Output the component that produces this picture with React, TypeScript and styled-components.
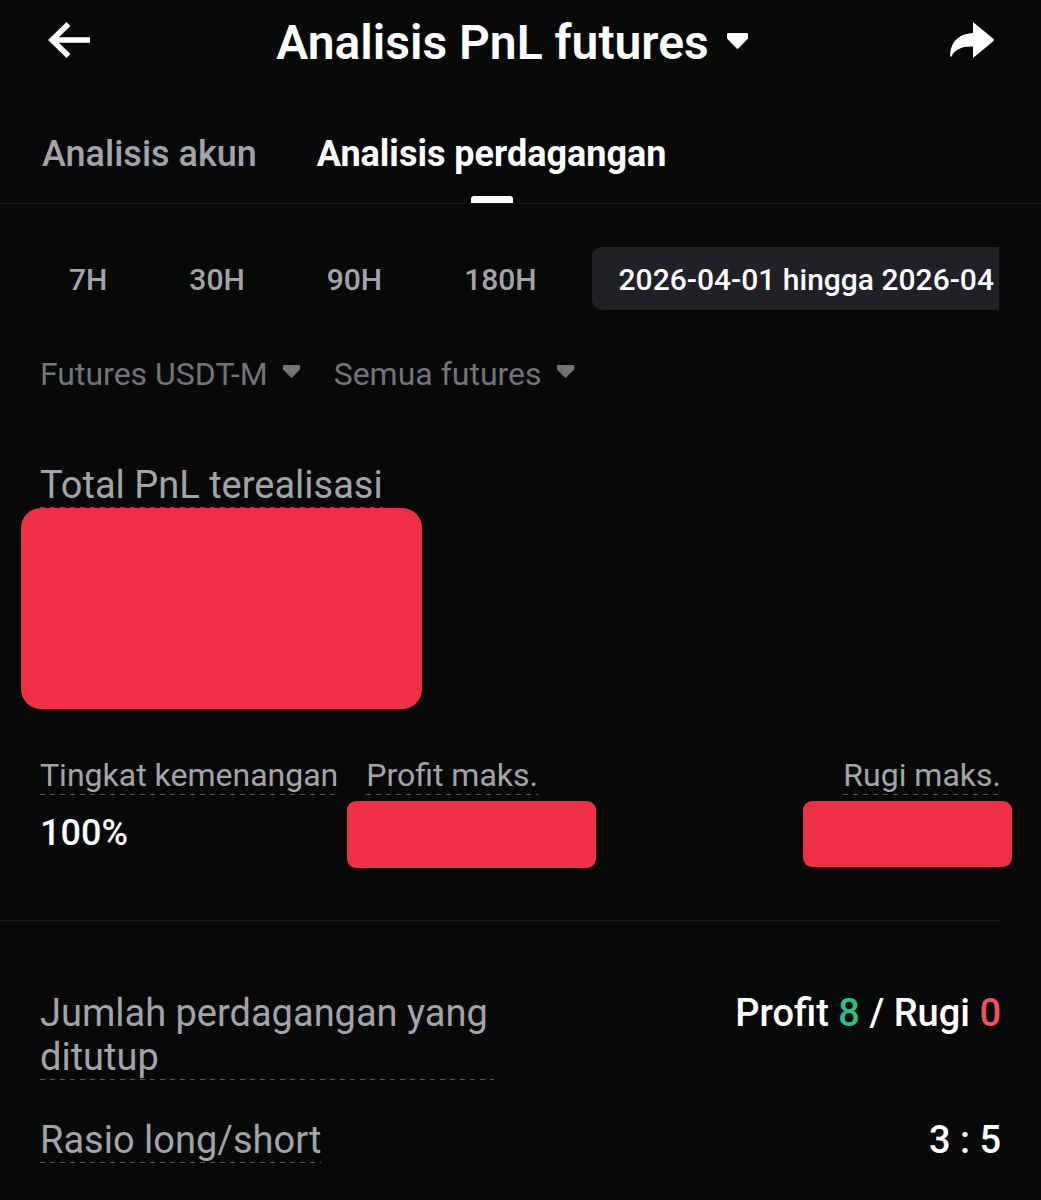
import React, { useState } from "react";
import styled, { createGlobalStyle } from "styled-components";

const c = {
  bg: "#070908",
  white: "#ffffff",
  label: "#a3a3a8",
  muted: "#73737a",
  chip: "#202126",
  line: "#181a1a",
  dash: "#55565a",
  red: "#ef3044",
  green: "#2dbd85",
  loss: "#f0525f",
};

const GlobalStyle = createGlobalStyle`
  *, *::before, *::after { box-sizing: border-box; }
  body {
    margin: 0;
    background: ${c.bg};
    color: ${c.white};
    font-family: Roboto, "Liberation Sans", sans-serif;
  }
  button, select { font-family: inherit; }
`;

const Page = styled.div`
  min-height: 100vh;
  background: ${c.bg};
`;

const Header = styled.header`
  display: flex;
  align-items: center;
  justify-content: space-between;
  height: 84px;
  padding: 0 47px;
`;

const IconButton = styled.button`
  display: flex;
  padding: 0 0 4px;
  border: 0;
  background: none;
  color: ${c.white};
  cursor: pointer;
`;

const Title = styled.h1`
  margin: 0;
  font-size: 48px;
  line-height: 56px;
`;

const TitleButton = styled.button`
  display: flex;
  align-items: center;
  gap: 18px;
  padding: 2px 16px 0 0;
  border: 0;
  background: none;
  color: ${c.white};
  font-size: 48px;
  font-weight: 600;
  line-height: 56px;
  cursor: pointer;
`;

const Tabs = styled.nav`
  display: flex;
  gap: 60px;
  height: 120px;
  padding: 0 42px;
  border-bottom: 1px solid ${c.line};
`;

const Tab = styled.button<{ $active?: boolean }>`
  position: relative;
  padding: 20px 0 0;
  border: 0;
  background: none;
  color: ${(p) => (p.$active ? c.white : c.label)};
  font-size: 36px;
  font-weight: ${(p) => (p.$active ? 700 : 500)};
  line-height: 44px;
  cursor: pointer;

  &::after {
    content: "";
    display: ${(p) => (p.$active ? "block" : "none")};
    position: absolute;
    bottom: 0;
    left: 50%;
    width: 42px;
    height: 7px;
    margin-left: -21px;
    border-radius: 3px 3px 0 0;
    background: ${c.white};
  }
`;

const Chips = styled.div`
  display: flex;
  gap: 28px;
  margin: 43px 42px 0;
  overflow: hidden;
`;

const Chip = styled.button<{ $active?: boolean }>`
  flex: none;
  height: 63px;
  padding: 3px 27px 0;
  border: 0;
  border-radius: 10px;
  background: ${(p) => (p.$active ? c.chip : "none")};
  color: ${(p) => (p.$active ? c.white : c.label)};
  font-size: 30px;
  font-weight: 500;
  line-height: 40px;
  white-space: nowrap;
  cursor: pointer;
`;

const Filters = styled.div`
  display: flex;
  gap: 34px;
  margin: 44px 40px 0;
`;

const FilterLabel = styled.label`
  display: flex;
  align-items: center;
  gap: 15px;
  color: ${c.muted};
`;

const FilterSelect = styled.select`
  appearance: none;
  field-sizing: content;
  padding: 0;
  border: 0;
  background: none;
  color: inherit;
  font-size: 32px;
  line-height: 40px;
`;

const Realised = styled.section`
  margin: 69px 40px 0;
`;

const Term = styled.span<{ $large?: boolean }>`
  display: block;
  width: fit-content;
  padding-bottom: 1px;
  background: repeating-linear-gradient(90deg, ${c.dash} 0 5px, transparent 5px 10px) left bottom / 100% 1px no-repeat;
  color: ${c.label};
  font-size: ${(p) => (p.$large ? 38 : 32)}px;
  line-height: ${(p) => (p.$large ? 44 : 38)}px;
`;

const Mask = styled.div<{ $width: number; $height: number; $radius: number }>`
  width: ${(p) => p.$width}px;
  height: ${(p) => p.$height}px;
  margin: 0 -11px 0 -19px;
  border-radius: ${(p) => p.$radius}px;
  background: ${c.red};
`;

const Stats = styled.section`
  display: flex;
  gap: 28px;
  margin-right: 40px;
  padding: 47px 0 52px 40px;
  border-bottom: 1px solid ${c.line};
`;

const Stat = styled.div<{ $end?: boolean }>`
  display: flex;
  flex-direction: column;
  align-items: ${(p) => (p.$end ? "flex-end" : "flex-start")};
  gap: 6px;
  margin-left: ${(p) => (p.$end ? "auto" : 0)};
`;

const StatValue = styled.strong`
  font-size: 36px;
  font-weight: 500;
  line-height: 64px;
`;

const Rows = styled.section`
  display: flex;
  flex-direction: column;
  gap: 38px;
  margin: 70px 40px 0;
`;

const Row = styled.div`
  display: flex;
  align-items: flex-start;
  justify-content: space-between;
`;

const RowLabel = styled.div`
  flex: 0 1 454px;
`;

const RowValue = styled.strong`
  font-size: 38px;
  font-weight: 500;
  line-height: 44px;
`;

const Amount = styled.span<{ $tone: string }>`
  color: ${(p) => p.$tone};
`;

const CaretIcon = styled.svg`
  flex: none;
  margin-bottom: 5px;
`;

const Caret = ({ width = 17 }: { width?: number }) => (
  <CaretIcon width={width} height={Math.round(width * 0.76)} viewBox="0 0 21 16" fill="currentColor" aria-hidden="true">
    <path d="M1 0h19q1 0 1 1v4.500L11.300 15.500q-.8.700-1.600 0L0 5.500V1q0-1 1-1z" />
  </CaretIcon>
);

const periods = ["7H", "30H", "90H", "180H", "2026-04-01 hingga 2026-04"];

export default function App() {
  const [period, setPeriod] = useState(4);
  const [tab, setTab] = useState(1);

  return (
    <Page>
      <GlobalStyle />
      <Header>
        <IconButton aria-label="Kembali">
          <svg width="43" height="36" viewBox="0 0 43 36" fill="none" stroke="currentColor" strokeWidth="5.500">
            <path d="M21.500 2 5 18 21.500 34M5 18h38" />
          </svg>
        </IconButton>
        <Title>
          <TitleButton aria-haspopup="menu">
            Analisis PnL futures
            <Caret width={21} />
          </TitleButton>
        </Title>
        <IconButton aria-label="Bagikan">
          <svg width="44" height="36" viewBox="0 0 44 36" fill="currentColor">
            <path d="M23 0 43.300 16.800q1 1.200 0 2.400L23 36V24.500C13 24 5 27 1.500 34.500q-.7.700-1.200 0C-.5 23 7 11.500 23 11z" />
          </svg>
        </IconButton>
      </Header>

      <Tabs>
        {["Analisis akun", "Analisis perdagangan"].map((name, i) => (
          <Tab key={name} $active={i === tab} onClick={() => setTab(i)}>
            {name}
          </Tab>
        ))}
      </Tabs>

      <main>
        <Chips>
          {periods.map((name, i) => (
            <Chip key={name} $active={i === period} onClick={() => setPeriod(i)}>
              {name}
            </Chip>
          ))}
        </Chips>

        <Filters>
          <FilterLabel>
            <FilterSelect aria-label="Jenis futures">
              <option>Futures USDT-M</option>
            </FilterSelect>
            <Caret />
          </FilterLabel>
          <FilterLabel>
            <FilterSelect aria-label="Kontrak">
              <option>Semua futures</option>
            </FilterSelect>
            <Caret />
          </FilterLabel>
        </Filters>

        <Realised>
          <Term $large>Total PnL terealisasi</Term>
          <Mask $width={401} $height={201} $radius={20} />
        </Realised>

        <Stats>
          <Stat>
            <Term>Tingkat kemenangan</Term>
            <StatValue>100%</StatValue>
          </Stat>
          <Stat>
            <Term>Profit maks.</Term>
            <Mask $width={249} $height={67} $radius={9} />
          </Stat>
          <Stat $end>
            <Term>Rugi maks.</Term>
            <Mask $width={209} $height={66} $radius={9} />
          </Stat>
        </Stats>

        <Rows>
          <Row>
            <RowLabel>
              <Term $large>Jumlah perdagangan yang ditutup</Term>
            </RowLabel>
            <RowValue>
              Profit <Amount $tone={c.green}>8</Amount> / Rugi <Amount $tone={c.loss}>0</Amount>
            </RowValue>
          </Row>
          <Row>
            <RowLabel>
              <Term $large>Rasio long/short</Term>
            </RowLabel>
            <RowValue>3 : 5</RowValue>
          </Row>
        </Rows>
      </main>
    </Page>
  );
}
